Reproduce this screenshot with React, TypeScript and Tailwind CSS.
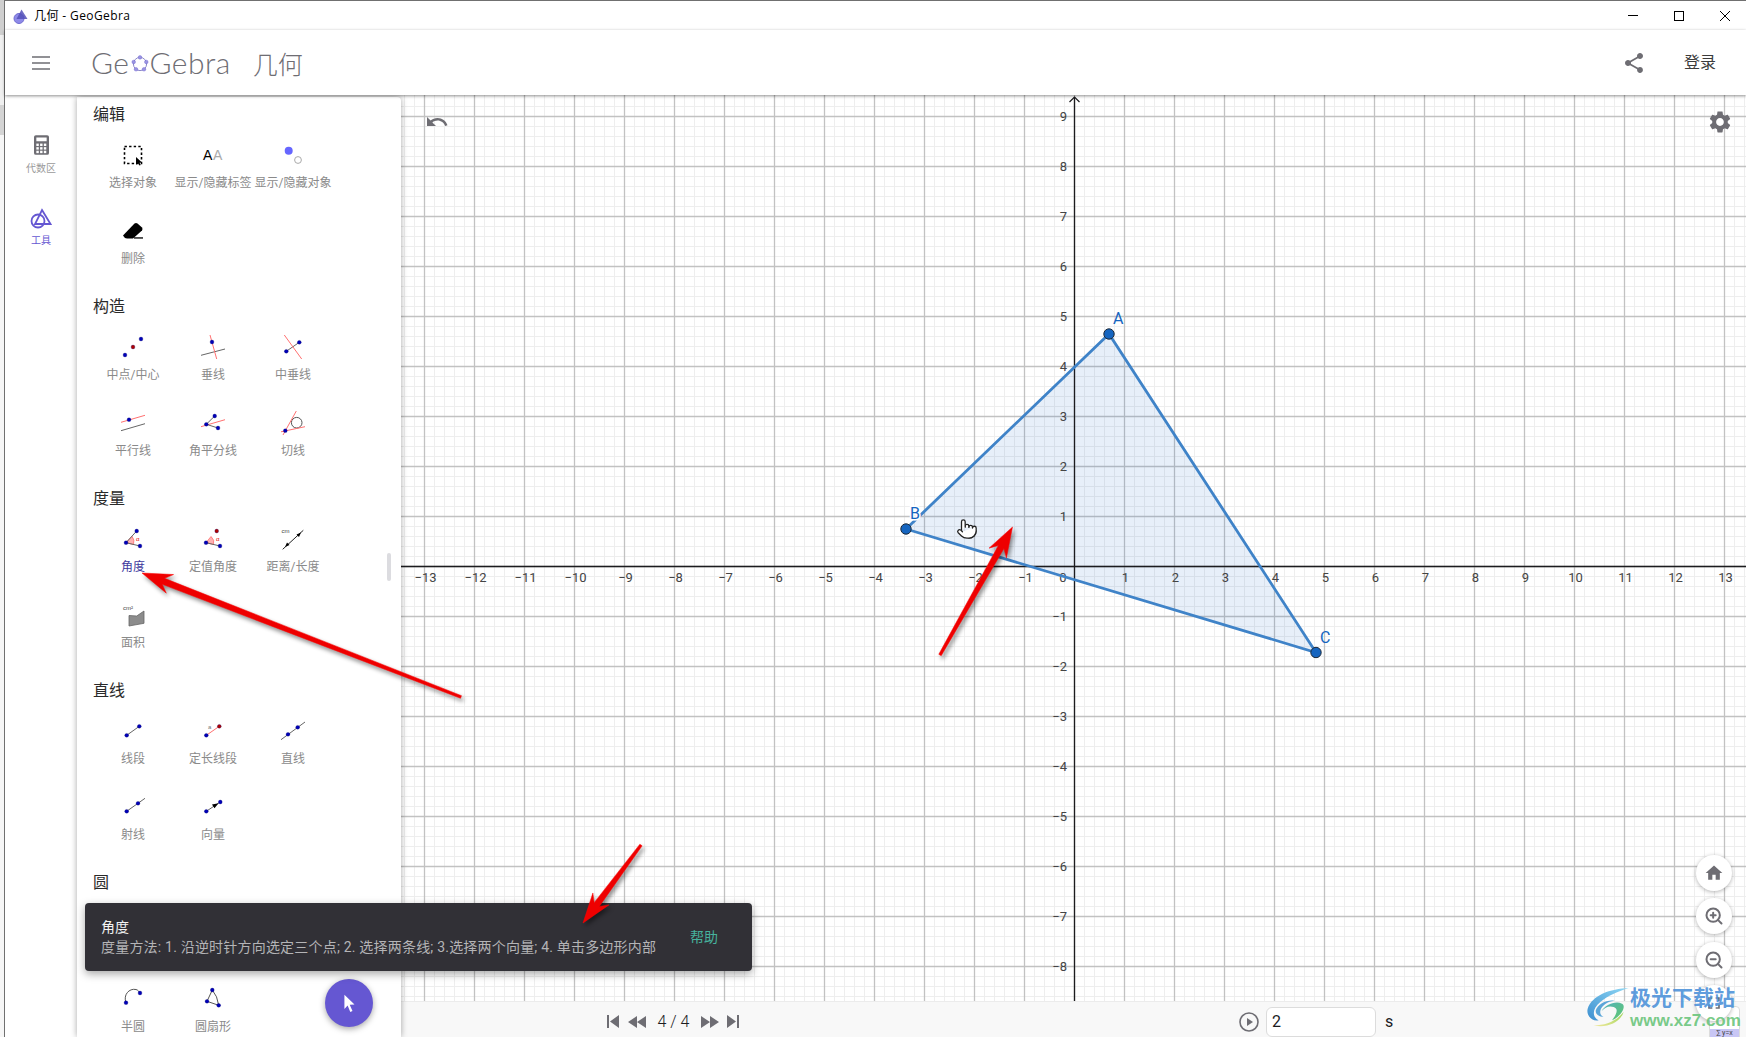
import React from "react";
import { Pointer, ZoomIn, ZoomOut } from "lucide-react";

const BLUE = "#0000b8";
const DRED = "#b00000";
const RED = "#ff7070";
const DARK = "#666666";

const L = ({ p, c = DARK, w = 1 }: { p: number[]; c?: string; w?: number }) => (
  <line x1={p[0]} y1={p[1]} x2={p[2]} y2={p[3]} stroke={c} strokeWidth={w} />
);
const D = ({ x, y, c = BLUE }: { x: number; y: number; c?: string }) => (
  <circle cx={x} cy={y} r={1.9} fill={c} stroke="#00006a" strokeWidth={0.3} />
);
const Ico = ({ children }: { children: React.ReactNode }) => (
  <svg viewBox="0 0 32 32" className="w-8 h-8 block">
    {children}
  </svg>
);

const icons: Record<string, React.ReactNode> = {
  select: (
    <>
      <rect x="7.5" y="7.5" width="17" height="17" fill="none" stroke="#000" strokeWidth="1.6" strokeDasharray="2.4 2.2" />
      <path d="M19 18l6 5.5-2.4.2 1.2 2.2-1.4.7-1.2-2.3-2.2 1.5z" fill="#000" />
    </>
  ),
  labels: (
    <>
      <text x="6" y="21" fontSize="14" fontFamily="Liberation Sans" fill="#000">A</text>
      <text x="16" y="21" fontSize="14" fontFamily="Liberation Sans" fill="#aaa">A</text>
    </>
  ),
  hide: (
    <>
      <circle cx="11.7" cy="11.7" r="4" fill="#6666ff" />
      <circle cx="21" cy="21" r="3.4" fill="#fff" stroke="#aaa" strokeWidth="1" />
    </>
  ),
  erase: (
    <>
      <path d="M6 20.5 L17.5 8.5 Q19 7.5 20.5 8.5 L25 12.5 Q26 14 25 15.5 L16 23.5 L10 23.5 Q7.5 23.5 6 20.5Z" fill="#000" />
      <rect x="17" y="22.3" width="9" height="1.3" fill="#000" />
    </>
  ),
  mid: (
    <>
      <D x={8} y={24} />
      <D x={24} y={8} />
      <D x={16} y={16} c={DRED} />
    </>
  ),
  perp: (
    <>
      <L p={[4, 24.3, 28, 18]} />
      <L p={[13, 4, 19.7, 28]} c={RED} />
      <D x={15} y={11} />
    </>
  ),
  bisect: (
    <>
      <L p={[9.3, 20.3, 22.3, 11.3]} />
      <L p={[7.3, 4, 24.7, 28]} c={RED} />
      <D x={9.3} y={20.3} />
      <D x={22.3} y={11.3} />
    </>
  ),
  par: (
    <>
      <L p={[4, 15.3, 28, 8.3]} c={RED} />
      <L p={[4, 23.7, 28, 16.7]} />
      <D x={12} y={12.7} />
    </>
  ),
  angbis: (
    <>
      <L p={[4, 19.7, 28, 12.7]} c={RED} />
      <L p={[9.3, 17.3, 17.7, 9]} />
      <L p={[9.3, 17.3, 21, 21]} />
      <D x={9.3} y={17.3} />
      <D x={17.7} y={9} />
      <D x={21} y={21} />
    </>
  ),
  tan: (
    <>
      <circle cx="19.7" cy="15.7" r="5.3" fill="none" stroke="#555" strokeWidth="1" />
      <L p={[6, 28, 19.3, 4]} c={RED} />
      <L p={[4, 24.8, 28, 19.7]} c={RED} />
      <D x={8.3} y={23.7} />
    </>
  ),
  angle: (
    <>
      <path d="M9 19.7 L15 13.3 Q18 17 16.5 21.5Z" fill="#ffb0b0" stroke={RED} strokeWidth="0.8" />
      <L p={[9, 19.7, 19.7, 8]} />
      <L p={[9, 19.7, 23, 23]} />
      <D x={9} y={19.7} />
      <D x={19.7} y={8} />
      <D x={23} y={23} />
      <text x="19" y="18" fontSize="6" fill="#e00000" fontFamily="Liberation Sans">α</text>
    </>
  ),
  fixang: (
    <>
      <path d="M9 19.7 L14 13.5 Q18 17 16.5 21.5Z" fill="#ffb0b0" stroke={RED} strokeWidth="0.8" />
      <L p={[9, 19.7, 23, 23]} />
      <D x={9} y={19.7} />
      <D x={19.7} y={8} c={DRED} />
      <D x={23} y={23} />
      <text x="19" y="18" fontSize="6" fill="#e00000" fontFamily="Liberation Sans">α</text>
    </>
  ),
  dist: (
    <>
      <L p={[5.7, 26.3, 26.3, 7.3]} c="#222" />
      <path d="M8 24 L10 19.5 L12.5 22Z M24 9.5 L22 14 L19.5 11.5Z" fill="#000" />
      <text x="4.5" y="9.5" fontSize="6" fill="#444" fontFamily="Liberation Sans">cm</text>
    </>
  ),
  area: (
    <>
      <path d="M12 16.5 L19.7 17 L27 12 L27 24.3 L12 27Z" fill="#8c8c8c" stroke="#666" strokeWidth="0.8" />
      <text x="6" y="10.5" fontSize="6" fill="#444" fontFamily="Liberation Sans">cm²</text>
    </>
  ),
  seg: (
    <>
      <L p={[9.7, 20.3, 22.3, 11.3]} />
      <D x={9.7} y={20.3} />
      <D x={22.3} y={11.3} />
    </>
  ),
  fixseg: (
    <>
      <L p={[9.3, 20.3, 22.3, 11.3]} c={RED} />
      <D x={9.3} y={20.3} />
      <D x={22.3} y={11.3} c={DRED} />
      <text x="11" y="13.5" fontSize="6" fill="#777" fontFamily="Liberation Sans">a</text>
    </>
  ),
  line: (
    <>
      <L p={[4, 24.7, 28, 7]} />
      <D x={11} y={19.3} />
      <D x={20.7} y={12.3} />
    </>
  ),
  ray: (
    <>
      <L p={[9.7, 20.3, 28, 7.3]} />
      <D x={9.7} y={20.3} />
      <D x={21} y={12.3} />
    </>
  ),
  vector: (
    <>
      <L p={[9.3, 20.3, 23.3, 11]} />
      <path d="M21.5 12.3 L15 13.5 L17.5 17.2Z" fill="#000" />
      <D x={9.3} y={20.3} />
      <D x={23.3} y={11} />
    </>
  ),
  semi: (
    <>
      <path d="M9 19.7 C6 12 12 5 19 6.5 C21 7 22 8.5 23 10" fill="none" stroke="#555" />
      <D x={9} y={19.7} />
      <D x={23} y={10} />
    </>
  ),
  sector: (
    <>
      <path d="M10 18.3 L15.3 7 Q20.5 13 21.7 22.3Z" fill="none" stroke="#555" />
      <D x={10} y={18.3} />
      <D x={15.3} y={7} />
      <D x={21.7} y={22.3} />
    </>
  ),
};

const sections: { title: string; tools: [string, string, boolean?][] }[] = [
  { title: "编辑", tools: [["select", "选择对象"], ["labels", "显示/隐藏标签"], ["hide", "显示/隐藏对象"], ["erase", "删除"]] },
  { title: "构造", tools: [["mid", "中点/中心"], ["perp", "垂线"], ["bisect", "中垂线"], ["par", "平行线"], ["angbis", "角平分线"], ["tan", "切线"]] },
  { title: "度量", tools: [["angle", "角度", true], ["fixang", "定值角度"], ["dist", "距离/长度"], ["area", "面积"]] },
  { title: "直线", tools: [["seg", "线段"], ["fixseg", "定长线段"], ["line", "直线"], ["ray", "射线"], ["vector", "向量"]] },
  { title: "圆", tools: [["", ""], ["", ""], ["", ""], ["semi", "半圆"], ["sector", "圆扇形"]] },
];

const range = (a: number, b: number) => Array.from({ length: b - a + 1 }, (_, i) => a + i);
const OX = 1074.5;
const OY = 566.5;
const A = [1109, 334];
const B = [906, 529];
const C = [1316, 652.5];

function Graph() {
  const minorX = range(-67, 67).filter((i) => i % 5 !== 0).map((i) => OX + i * 10);
  const minorY = range(-46, 47).filter((i) => i % 5 !== 0).map((i) => OY + i * 10);
  const majorX = range(-14, 14).map((i) => OX + i * 50);
  const majorY = range(-9, 10).map((i) => OY - i * 50);
  return (
    <svg viewBox="401 95 1345 906" className="absolute inset-0 w-full h-full">
      {minorX.map((x) => <line key={x} x1={x} y1={95} x2={x} y2={1001} stroke="#eeeeee" strokeWidth="1" />)}
      {minorY.map((y) => <line key={y} x1={401} y1={y} x2={1746} y2={y} stroke="#eeeeee" strokeWidth="1" />)}
      {majorX.map((x) => <line key={x} x1={x} y1={95} x2={x} y2={1001} stroke="#c2c2c2" strokeWidth="1.3" />)}
      {majorY.map((y) => <line key={y} x1={401} y1={y} x2={1746} y2={y} stroke="#c2c2c2" strokeWidth="1.3" />)}
      <polygon points={`${A} ${B} ${C}`} fill="#1565c0" fillOpacity="0.1" />
      <line x1={OX} y1={97} x2={OX} y2={1001} stroke="#1c1c1f" strokeWidth="1.3" />
      <line x1={401} y1={OY} x2={1746} y2={OY} stroke="#1c1c1f" strokeWidth="1.3" />
      <path d={`M${OX - 5} 102 L${OX} 97 L${OX + 5} 102`} fill="none" stroke="#1c1c1f" strokeWidth="1.2" />
      {range(-13, 13).filter((i) => i !== 0).map((i) => (
        <text key={i} x={OX + i * 50 + 1} y={582} textAnchor="middle" fontSize="13" fontFamily="Roboto" fill="#444">
          {i < 0 ? "−" + -i : i}
        </text>
      ))}
      <text x={1063} y={582} textAnchor="middle" fontSize="13" fontFamily="Roboto" fill="#444">0</text>
      {range(-8, 9).filter((i) => i !== 0).map((i) => (
        <text key={i} x={1067} y={OY - i * 50 + 4} textAnchor="end" fontSize="13" fontFamily="Roboto" fill="#444">
          {i < 0 ? "−" + -i : i}
        </text>
      ))}
      <polyline points={`${B} ${A} ${C} ${B}`} fill="none" stroke="#3f83c8" strokeWidth="2.8" />
      {[A, B, C].map((p, i) => (
        <circle key={i} cx={p[0]} cy={p[1]} r="5.2" fill="#1565c0" stroke="#1c2a3a" strokeWidth="1" />
      ))}
      <text x={1113} y={324} fontSize="16" fontFamily="Roboto" fill="#1565c0">A</text>
      <text x={910} y={519} fontSize="16" fontFamily="Roboto" fill="#1565c0" stroke="#ffffff" strokeWidth="3" paintOrder="stroke">B</text>
      <text x={1320} y={643} fontSize="16" fontFamily="Roboto" fill="#1565c0">C</text>
    </svg>
  );
}

function Arrow({ x1, y1, x2, y2 }: { x1: number; y1: number; x2: number; y2: number }) {
  const len = Math.hypot(x2 - x1, y2 - y1);
  const ux = (x2 - x1) / len;
  const uy = (y2 - y1) / len;
  const nx = -uy;
  const ny = ux;
  const at = (back: number, side: number) => `${x2 - ux * back + nx * side},${y2 - uy * back + ny * side}`;
  const pts = [
    at(0, 0), at(30, 10), at(23, 3.2), at(len, 1.4), at(len, -1.4), at(23, -3.2), at(30, -10),
  ].join(" ");
  return <polygon points={pts} fill="#ee0000" stroke="#ff0000" strokeWidth="0.5" />;
}

const Mat = ({ d, className }: { d: string; className: string }) => (
  <svg viewBox="0 0 24 24" className={className} fill="currentColor">
    <path d={d} />
  </svg>
);

const ROUND = "w-9 h-9 rounded-full bg-white flex items-center justify-center shadow-[0_1px_4px_rgba(0,0,0,0.3)] text-[#6e6d73]";

export default function App() {
  return (
    <div className="relative w-[1746px] h-[1037px] overflow-hidden bg-white flex font-['Roboto','Noto_Sans_CJK_SC',sans-serif]">
      <div className="w-[4px] flex flex-col shrink-0 bg-[#f6f6f6]">
        <div className="h-[35px] bg-[#cfcfcf]" />
        <div className="h-[70px] bg-[#f0f0f0]" />
        <div className="h-[30px] bg-[#d4d4d4]" />
      </div>
      <div className="flex-1 min-w-0 flex flex-col border-l border-t border-[#707070]">
        <div className="h-[29px] flex items-center pl-[8px] text-[12px] tracking-[0.4px] text-black font-['Open_Sans','Noto_Sans_CJK_SC',sans-serif] shrink-0">
          <svg viewBox="0 0 16 16" className="w-4 h-4">
            <circle cx="6" cy="10.5" r="5" fill="#8e8ae8" stroke="#6f6bd0" />
            <path d="M8.5 1.5 L14.5 11 L3.5 11Z" fill="#5350b8" opacity="0.85" />
          </svg>
          <span className="ml-[5px]">几何 - GeoGebra</span>
          <div className="ml-auto flex gap-[4px]">
            <div className="w-[42px] h-[29px] flex items-center justify-center">
              <div className="w-[10px] h-px bg-black" />
            </div>
            <div className="w-[42px] h-[29px] flex items-center justify-center">
              <div className="w-[10px] h-[10px] border border-black" />
            </div>
            <div className="w-[42px] h-[29px] flex items-center justify-center">
              <svg viewBox="0 0 10 10" className="w-[10px] h-[10px]"><path d="M0 0L10 10M10 0L0 10" stroke="#000" strokeWidth="1" /></svg>
            </div>
          </div>
        </div>
        <header className="relative z-20 h-[65px] shrink-0 flex items-center bg-white shadow-[0_1px_3px_rgba(0,0,0,0.45)] pl-[27px] pr-[30px]">
          <svg viewBox="0 0 18 14" className="w-[18px] h-[14px] text-[#6e6d73]">
            <path d="M0 1h18M0 7h18M0 13h18" stroke="currentColor" strokeWidth="1.6" />
          </svg>
          <div className="ml-[41px] mb-[2px] flex items-center text-[30px] leading-none font-light text-[#6e6d73] font-['Lato',sans-serif] tracking-[0.5px]">
            <span>Ge</span>
            <svg viewBox="0 0 18 18" className="w-[18px] h-[18px] mt-[4px] mx-px">
              <circle cx="9" cy="9" r="6.6" fill="none" stroke="#8d89c8" strokeWidth="1" />
              {[[9, 2.4], [15.3, 7], [13, 14.3], [5, 14.3], [2.7, 7]].map((p, i) => (
                <circle key={i} cx={p[0]} cy={p[1]} r="1.8" fill="#9a96e0" stroke="#6557d2" strokeWidth="0.4" />
              ))}
            </svg>
            <span>Gebra</span>
          </div>
          <span className="ml-[22px] mt-[6px] text-[25px] leading-none font-light text-[#6e6d73]">几何</span>
          <div className="ml-auto flex items-center gap-[38px]">
            <Mat className="w-6 h-6 text-[#6e6d73]" d="M18 16.08c-.76 0-1.44.3-1.96.77L8.91 12.7c.05-.23.09-.46.09-.7s-.04-.47-.09-.7l7.05-4.11c.54.5 1.25.81 2.04.81 1.66 0 3-1.34 3-3s-1.34-3-3-3-3 1.34-3 3c0 .24.04.47.09.7L8.04 9.81C7.5 9.31 6.79 9 6 9c-1.66 0-3 1.34-3 3s1.34 3 3 3c.79 0 1.5-.31 2.04-.81l7.12 4.16c-.05.21-.08.43-.08.65 0 1.61 1.31 2.92 2.92 2.92s2.92-1.31 2.92-2.92-1.31-2.92-2.92-2.92z" />
            <span className="text-[16px] text-[#3c3c3c]">登录</span>
          </div>
        </header>
        <div className="flex-1 min-h-0 flex">
          <nav className="w-[72px] shrink-0 flex flex-col items-center pt-[40px] bg-white">
            <svg viewBox="0 0 16 21" className="w-[15px] h-[20px] text-[#6e6d73]">
              <rect width="16" height="21" rx="2" fill="currentColor" />
              <rect x="2.5" y="2.5" width="11" height="4" fill="#fff" />
              {[0, 1, 2].flatMap((r) => [0, 1, 2].map((c) => (
                <rect key={`${r}${c}`} x={2.5 + c * 4} y={9 + r * 3.8} width="2.6" height="2.6" fill="#fff" />
              )))}
            </svg>
            <span className="mt-[7px] text-[10px] leading-[14px] text-[#9a9a9a]">代数区</span>
            <svg viewBox="0 0 22 22" className="mt-[31px] w-[22px] h-[22px] text-[#6557d2]">
              <circle cx="8" cy="14" r="6.5" fill="none" stroke="currentColor" strokeWidth="1.8" />
              <path d="M12 3 L20.5 17 L5 17Z" fill="none" stroke="currentColor" strokeWidth="1.8" />
            </svg>
            <span className="mt-[5px] text-[10px] leading-[14px] text-[#6557d2]">工具</span>
          </nav>
          <aside className="relative z-10 w-[324px] shrink-0 mt-[2px] pt-[5px] pl-[16px] overflow-hidden bg-white rounded-tr-[4px] shadow-[0_0_6px_rgba(0,0,0,0.35)]">
            {sections.map((s) => (
              <section key={s.title} className="pb-[3px]">
                <h3 className="h-[24px] leading-[26px] mb-[13px] text-[16px] text-[#2a2a2a] font-normal">{s.title}</h3>
                <div className="grid grid-cols-[80px_80px_80px] auto-rows-[76px] h-[152px]">
                  {s.tools.map(([ic, label, active], i) => (
                    <div key={i} className="flex flex-col items-center">
                      <Ico>{icons[ic]}</Ico>
                      {label && (
                        <span className={`mt-[4px] text-[12px] leading-[16px] whitespace-nowrap ${active ? "text-[#423a9e]" : "text-[#8a8a8a]"}`}>
                          {label}
                        </span>
                      )}
                    </div>
                  ))}
                </div>
              </section>
            ))}
            <div className="absolute left-[310px] top-[456px] w-[4px] h-[28px] rounded-full bg-[#dcdce0]" />
          </aside>
          <main className="relative flex-1 min-w-0 flex flex-col">
            <div className="relative flex-1 min-h-0 overflow-hidden">
              <Graph />
              <Mat className="absolute left-[24px] top-[15px] w-6 h-6 text-[#6e6d73]" d="M12.5 8c-2.65 0-5.05.99-6.9 2.6L2 7v9h9l-3.62-3.62c1.39-1.16 3.16-1.88 5.12-1.88 3.54 0 6.55 2.31 7.6 5.5l2.37-.78C21.08 11.03 17.15 8 12.5 8z" />
              <Mat className="absolute right-[13px] top-[14px] w-[26px] h-[26px] text-[#6e6d73]" d="M19.14 12.94c.04-.3.06-.61.06-.94 0-.32-.02-.64-.07-.94l2.03-1.58c.18-.14.23-.41.12-.61l-1.92-3.32c-.12-.22-.37-.29-.59-.22l-2.39.96c-.5-.38-1.03-.7-1.62-.94l-.36-2.54c-.04-.24-.24-.41-.48-.41h-3.84c-.24 0-.43.17-.47.41l-.36 2.54c-.59.24-1.13.57-1.62.94l-2.39-.96c-.22-.08-.47 0-.59.22L2.74 8.87c-.12.21-.08.47.12.61l2.03 1.58c-.05.3-.09.63-.09.94s.02.64.07.94l-2.03 1.58c-.18.14-.23.41-.12.61l1.92 3.32c.12.22.37.29.59.22l2.39-.96c.5.38 1.03.7 1.62.94l.36 2.54c.05.24.24.41.48.41h3.84c.24 0 .44-.17.47-.41l.36-2.54c.59-.24 1.13-.56 1.62-.94l2.39.96c.22.08.47 0 .59-.22l1.92-3.32c.12-.22.07-.47-.12-.61l-2.01-1.58zM12 15.6c-1.98 0-3.6-1.62-3.6-3.6s1.62-3.6 3.6-3.6 3.6 1.62 3.6 3.6-1.62 3.6-3.6 3.6z" />
            </div>
            <div className="relative h-[36px] shrink-0 flex items-center pl-[206px] pt-[4px] bg-[#f8f8f8] border-t border-[#ececec] text-[#1c1c1f]">
              <svg viewBox="0 0 12 13" className="w-[12px] h-[13px] text-[#6e6d73]"><path d="M0 0h2v13H0zM12 0v13L3 6.5z" fill="currentColor" /></svg>
              <svg viewBox="0 0 18 12" className="ml-[9px] w-[18px] h-[12px] text-[#6e6d73]"><path d="M9 0v12L0 6zM18 0v12L9 6z" fill="currentColor" /></svg>
              <span className="ml-[11px] w-[33px] text-center text-[16px] leading-none whitespace-nowrap font-light">4 / 4</span>
              <svg viewBox="0 0 18 12" className="ml-[11px] w-[18px] h-[12px] text-[#6e6d73]"><path d="M0 0v12l9-6zM9 0v12l9-6z" fill="currentColor" /></svg>
              <svg viewBox="0 0 12 13" className="ml-[8px] w-[12px] h-[13px] text-[#6e6d73]"><path d="M0 0v13l9-6.5zM10 0h2v13h-2z" fill="currentColor" /></svg>
              <svg viewBox="0 0 20 20" className="ml-[500px] w-[20px] h-[20px] text-[#6e6d73]">
                <circle cx="10" cy="10" r="9" fill="none" stroke="currentColor" strokeWidth="1.6" />
                <path d="M8 6l6 4-6 4z" fill="currentColor" />
              </svg>
              <input readOnly value="2" className="ml-[7px] w-[110px] h-[30px] pl-[5px] text-[16px] bg-white border border-[#dcdcdc] rounded-md outline-none" />
              <span className="ml-[9px] text-[16px]">s</span>
              <div className="absolute left-[1308px] top-[4px] w-[31px] h-[32px] bg-white border border-[#dcdcdc] rounded-t-[4px] flex flex-col items-center justify-end overflow-hidden">
                <div className="w-full text-center text-[7px] leading-[8px] text-[#444] bg-[#c8c6f5]">∑ y=x</div>
              </div>
            </div>
          </main>
        </div>
      </div>

      <div className="absolute left-[1696px] top-[855px] flex flex-col gap-[7.3px]">
        <div className={ROUND}>
          <Mat className="w-[20px] h-[20px]" d="M10 20v-6h4v6h5v-8h3L12 3 2 12h3v8z" />
        </div>
        <div className={ROUND}><ZoomIn className="w-[20px] h-[20px]" strokeWidth={2.4} /></div>
        <div className={ROUND}><ZoomOut className="w-[20px] h-[20px]" strokeWidth={2.4} /></div>
        <div className={ROUND}>
          <Mat className="w-[20px] h-[20px]" d="M7 14H5v5h5v-2H7v-3zm-2-4h2V7h3V5H5v5zm12 7h-3v2h5v-5h-2v3zM14 5v2h3v3h2V5h-5z" />
        </div>
      </div>

      <div className="absolute left-[325px] top-[979px] w-12 h-12 rounded-full bg-[#6557d2] flex items-center justify-center shadow-[0_2px_6px_rgba(0,0,0,0.35)] z-20">
        <svg viewBox="0 0 24 24" className="w-[22px] h-[22px]"><path d="M7 3l11 10.5-5.2.4 3 6.8-2.4 1-2.9-6.9L7 18.5z" fill="#fff" /></svg>
      </div>

      <div className="absolute left-[85px] top-[903px] w-[667px] h-[68px] z-20 rounded-[4px] bg-[#313036] flex items-center justify-between pl-[16px] pr-[34px] shadow-[0_3px_8px_rgba(0,0,0,0.35)]">
        <div>
          <div className="text-[14px] leading-[20px] text-[#f2f2f2]">角度</div>
          <div className="text-[14px] leading-[20px] tracking-[0.2px] text-[#b4b4b6] whitespace-nowrap">度量方法: 1. 沿逆时针方向选定三个点; 2. 选择两条线; 3.选择两个向量; 4. 单击多边形内部</div>
        </div>
        <span className="text-[14px] text-[#46b29d]">帮助</span>
      </div>

      <Pointer className="absolute left-[956px] top-[517px] w-[22px] h-[24px] z-20 text-[#222]" fill="#fff" strokeWidth={1.4} />

      <svg viewBox="0 0 1746 1037" className="absolute inset-0 w-[1746px] h-[1037px] z-30 pointer-events-none drop-shadow-[2px_3px_2px_rgba(0,0,0,0.45)]">
        <Arrow x1={461} y1={697} x2={142} y2={573} />
        <Arrow x1={940} y1={655} x2={1012.5} y2={527} />
        <Arrow x1={641} y1={845} x2={583} y2={923} />
      </svg>

      <div className="absolute left-[1587px] top-[985px] z-40 flex items-start pointer-events-none">
        <svg viewBox="0 0 126 126" className="w-[42px] h-[42px] mt-[1px]">
          <defs>
            <linearGradient id="wmb" x1="0" y1="1" x2="1" y2="0">
              <stop offset="0" stopColor="#3d8fd0" />
              <stop offset="1" stopColor="#8fd8f5" />
            </linearGradient>
            <linearGradient id="wmg" x1="0" y1="0" x2="1" y2="1">
              <stop offset="0" stopColor="#4fb0c0" />
              <stop offset="1" stopColor="#62c96a" />
            </linearGradient>
            <linearGradient id="wmy" x1="0" y1="1" x2="1" y2="0">
              <stop offset="0" stopColor="#f0e89a" />
              <stop offset="1" stopColor="#9ad558" />
            </linearGradient>
          </defs>
          <path d="M125 6C70 8 15 28 2 68C-3 88 15 108 35 103C15 93 15 68 40 48C60 31 95 15 125 6Z" fill="url(#wmb)" />
          <path d="M26 74C32 52 62 40 82 44C62 46 44 58 40 74C38 84 44 90 50 92C38 92 26 86 26 74Z" fill="#5aa5d8" />
          <path d="M44 75C54 58 84 43 105 53C120 61 100 93 75 103C90 83 95 68 80 63C65 58 54 65 44 75Z" fill="url(#wmg)" />
          <path d="M20 118C55 118 85 108 110 78C100 108 60 128 20 118Z" fill="url(#wmy)" />
        </svg>
        <div className="ml-[1px] flex flex-col">
          <span className="text-[21px] leading-[26px] font-bold text-[#4a90d9]/90 whitespace-nowrap">极光下载站</span>
          <span className="text-[17px] leading-[20px] font-bold text-[#68c47a]/90 whitespace-nowrap font-['Liberation_Sans',sans-serif]">www.xz7.com</span>
        </div>
      </div>
    </div>
  );
}
